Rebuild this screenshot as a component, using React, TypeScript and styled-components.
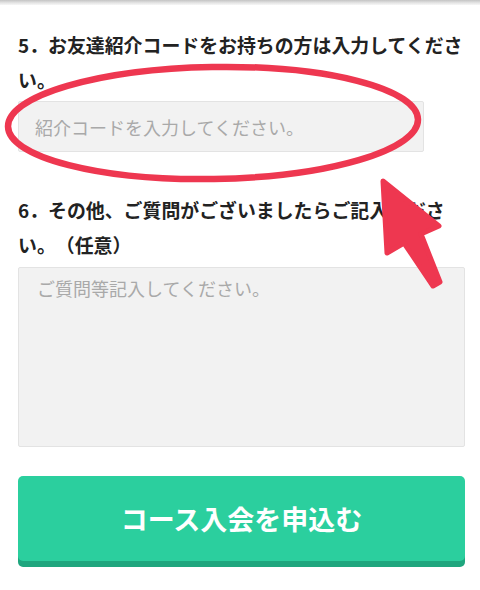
import React from 'react';
import styled, { createGlobalStyle } from 'styled-components';

const GlobalStyle = createGlobalStyle`
  html, body {
    margin: 0;
    padding: 0;
    background: #fff;
  }
  body {
    font-family: "Noto Sans CJK JP", "Noto Sans", sans-serif;
    color: #222;
    text-spacing-trim: space-all;
  }
`;

const Page = styled.div`
  position: relative;
  width: 480px;
  height: 590px;
  overflow: hidden;
  background: #fff;
`;

const TopShade = styled.div`
  height: 5px;
  background: linear-gradient(#c4c4c4, #e6e6e6 60%, #f7f7f7);
`;

const Form = styled.form`
  display: flex;
  flex-direction: column;
  padding: 22px 10px 0 18px;
`;

const Question = styled.label<{ $top?: number }>`
  display: block;
  margin-top: ${(p) => p.$top ?? 0}px;
  font-size: 18.9px;
  font-weight: 700;
  line-height: 35px;
  color: #222;
  text-spacing-trim: space-all;
`;

const CodeInput = styled.input`
  box-sizing: border-box;
  width: 406px;
  height: 51px;
  margin-top: 4px;
  padding: 0 16px;
  border: 1px solid #e3e3e3;
  border-radius: 2px;
  background: #f2f2f2;
  font-family: inherit;
  font-size: 18px;
  outline: none;
  &::placeholder {
    color: #a9a9a9;
  }
`;

const Comment = styled.textarea`
  box-sizing: border-box;
  width: 447px;
  height: 180px;
  margin-top: 5px;
  padding: 7px 18px;
  border: 1px solid #e3e3e3;
  border-radius: 2px;
  background: #f2f2f2;
  font-family: inherit;
  font-size: 18px;
  line-height: 1.5;
  resize: none;
  outline: none;
  &::placeholder {
    color: #a9a9a9;
  }
`;

const Submit = styled.button`
  width: 447px;
  height: 85px;
  margin-top: 29px;
  border: none;
  border-radius: 5px;
  background: #2bcf9e;
  box-shadow: 0 6px 0 #1fa67e;
  color: #fff;
  font-family: inherit;
  font-size: 27px;
  font-weight: 700;
  cursor: pointer;
`;

const Annotation = styled.svg`
  position: absolute;
  left: 0;
  top: 0;
  pointer-events: none;
`;

const App: React.FC = () => {
  return (
    <Page>
      <GlobalStyle />
      <TopShade />
      <Form onSubmit={(e) => e.preventDefault()}>
        <Question htmlFor="code">
          5．お友達紹介コードをお持ちの方は入力してくださ<br />い。
        </Question>
        <CodeInput id="code" placeholder="紹介コードを入力してください。" />

        <Question htmlFor="comment" $top={40}>
          6．その他、ご質問がございましたらご記入くださ<br />い。（任意）
        </Question>
        <Comment id="comment" placeholder="ご質問等記入してください。" />

        <Submit type="submit">コース入会を申込む</Submit>
      </Form>

      {/* red marker drawn over the form */}
      <Annotation width="480" height="590" viewBox="0 0 480 590">
        <ellipse
          cx="213"
          cy="123"
          rx="205"
          ry="56"
          transform="rotate(-1 213 123)"
          fill="none"
          stroke="#ee3750"
          strokeWidth="6.5"
        />
        <polygon
          points="383,181 439,226 421,234 440,282 433,286 404,243 387,253"
          fill="#ee3750"
          stroke="#ee3750"
          strokeWidth="5"
          strokeLinejoin="round"
        />
      </Annotation>
    </Page>
  );
};

export default App;
